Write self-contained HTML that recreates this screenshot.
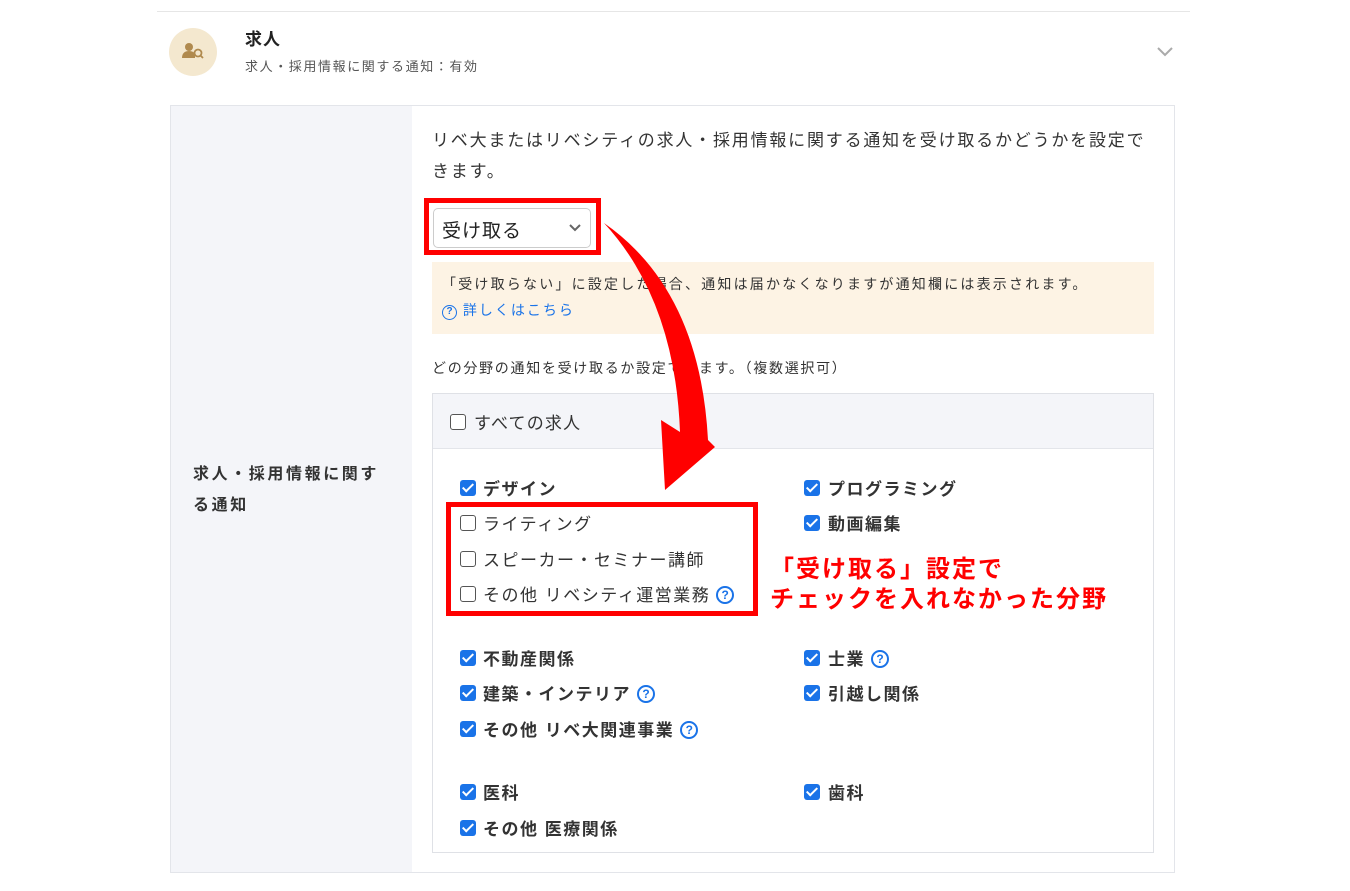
<!DOCTYPE html>
<html><head><meta charset="utf-8"><style>
*{box-sizing:border-box;margin:0;padding:0}
body{width:1350px;height:891px;background:#fff;font-family:"Liberation Sans","Noto Sans CJK JP",sans-serif;color:#333;position:relative;overflow:hidden}
.a{position:absolute;white-space:nowrap}
.cb{position:absolute;width:16px;height:16px;border-radius:3px}
.on{background:#1a73e8}
.on::after{content:"";position:absolute;left:5px;top:1px;width:4px;height:9px;border:solid #fff;border-width:0 2.5px 2.5px 0;transform:rotate(45deg)}
.off{border:1.5px solid #555;background:#fff}
.lab{position:absolute;font-size:17px;letter-spacing:1.5px;font-weight:bold;color:#333;white-space:nowrap}
.lab.n{font-weight:normal}
.q{display:inline-block;width:18px;height:18px;border:2px solid #1a73e8;border-radius:50%;color:#1a73e8;font-size:12px;font-weight:bold;text-align:center;line-height:14px;margin-left:6px;vertical-align:2px;letter-spacing:0}
</style></head><body>
<div class="a" style="left:157px;top:11px;width:1033px;height:1px;background:#e6e6e6"></div>
<div class="a" style="left:169px;top:28px;width:48px;height:48px;border-radius:50%;background:#f4e8cf"></div>
<svg class="a" style="left:182px;top:42px" width="24" height="20" viewBox="0 0 24 20"><circle cx="7" cy="5" r="4" fill="#b08a4e"/><path d="M0 16c0-5 3-7 7-7s6 2 6 4v3z" fill="#b08a4e"/><circle cx="16" cy="11" r="3.5" fill="none" stroke="#b08a4e" stroke-width="1.8"/><path d="M18.5 13.5l2.5 2.5" stroke="#b08a4e" stroke-width="1.8"/></svg>
<div class="a" style="left:245px;top:25px;font-size:17px;font-weight:bold;color:#222;letter-spacing:1px">求人</div>
<div class="a" style="left:245px;top:56px;font-size:13px;letter-spacing:1.6px;color:#555">求人・採用情報に関する通知：有効</div>
<svg class="a" style="left:1156px;top:46px" width="18" height="12"><path d="M2 2l7 7 7-7" fill="none" stroke="#aaa" stroke-width="2"/></svg>

<div class="a" style="left:170px;top:105px;width:1005px;height:768px;border:1px solid #e3e5ea"></div>
<div class="a" style="left:171px;top:106px;width:241px;height:766px;background:#f4f5f9"></div>
<div class="a" style="left:193px;top:459px;font-size:16px;letter-spacing:2.6px;font-weight:bold;line-height:31px;color:#333">求人・採用情報に関す<br>る通知</div>

<div class="a" style="left:432px;top:125px;font-size:17px;letter-spacing:1.8px;line-height:31px;color:#333">リベ大またはリベシティの求人・採用情報に関する通知を受け取るかどうかを設定で<br>きます。</div>

<div class="a" style="left:424px;top:198px;width:177px;height:57px;border:5px solid #f00"></div>
<div class="a" style="left:433px;top:208px;width:158px;height:40px;border:1px solid #ccc;border-radius:5px;background:#fff"></div>
<div class="a" style="left:442px;top:216px;font-size:19px;letter-spacing:1px;color:#222">受け取る</div>
<svg class="a" style="left:568px;top:223px" width="14" height="10"><path d="M2 2l5 5 5-5" fill="none" stroke="#666" stroke-width="2"/></svg>

<div class="a" style="left:432px;top:262px;width:722px;height:72px;background:#fdf3e4"></div>
<div class="a" style="left:442px;top:274px;font-size:14px;letter-spacing:2.2px;color:#333">「受け取らない」に設定した場合、通知は届かなくなりますが通知欄には表示されます。</div>
<div class="a" style="left:442px;top:300px;font-size:14px;letter-spacing:2px;color:#1a73e8"><span style="display:inline-block;width:15px;height:15px;border:1.5px solid #1a73e8;border-radius:50%;font-size:10px;text-align:center;line-height:12px;font-weight:bold;vertical-align:1px;letter-spacing:0">?</span> 詳しくはこちら</div>

<div class="a" style="left:432px;top:358px;font-size:14px;letter-spacing:1.7px;color:#333">どの分野の通知を受け取るか設定できます。（複数選択可）</div>

<div class="a" style="left:432px;top:393px;width:722px;height:460px;border:1px solid #dfe1e6"></div>
<div class="a" style="left:433px;top:394px;width:720px;height:55px;background:#f4f5f9;border-bottom:1px solid #e3e5ea"></div>
<div class="cb off" style="left:450px;top:414px"></div><div class="lab n" style="left:474px;top:409px;letter-spacing:1.2px">すべての求人</div>

<div class="cb on" style="left:460px;top:480px"></div><div class="lab" style="left:483px;top:475px">デザイン</div>
<div class="cb off" style="left:460px;top:515px"></div><div class="lab n" style="left:483px;top:510px">ライティング</div>
<div class="cb off" style="left:460px;top:551px"></div><div class="lab n" style="left:483px;top:546px">スピーカー・セミナー講師</div>
<div class="cb off" style="left:460px;top:586px"></div><div class="lab n" style="left:483px;top:581px">その他 リベシティ運営業務<span class="q">?</span></div>

<div class="cb on" style="left:804px;top:480px"></div><div class="lab" style="left:828px;top:475px">プログラミング</div>
<div class="cb on" style="left:804px;top:515px"></div><div class="lab" style="left:828px;top:510px">動画編集</div>

<div class="cb on" style="left:460px;top:650px"></div><div class="lab" style="left:483px;top:645px">不動産関係</div>
<div class="cb on" style="left:460px;top:685px"></div><div class="lab" style="left:483px;top:680px">建築・インテリア<span class="q">?</span></div>
<div class="cb on" style="left:460px;top:721px"></div><div class="lab" style="left:483px;top:716px">その他 リベ大関連事業<span class="q">?</span></div>
<div class="cb on" style="left:804px;top:650px"></div><div class="lab" style="left:828px;top:645px">士業<span class="q">?</span></div>
<div class="cb on" style="left:804px;top:685px"></div><div class="lab" style="left:828px;top:680px">引越し関係</div>

<div class="cb on" style="left:460px;top:784px"></div><div class="lab" style="left:483px;top:779px">医科</div>
<div class="cb on" style="left:460px;top:820px"></div><div class="lab" style="left:483px;top:815px">その他 医療関係</div>
<div class="cb on" style="left:804px;top:784px"></div><div class="lab" style="left:828px;top:779px">歯科</div>

<div class="a" style="left:446px;top:502px;width:312px;height:114px;border:5px solid #f00"></div>
<div class="a" style="left:770px;top:555px;font-size:24px;letter-spacing:2px;font-weight:bold;color:#f00;line-height:30px">「受け取る」設定で<br>チェックを入れなかった分野</div>

<svg class="a" style="left:0;top:0" width="1350" height="891"><path d="M604 223 Q700 290 708 440 L715 447 L665 490 L661 420 L680 432 Q675 300 604 223 Z" fill="#f00"/></svg>
</body></html>
